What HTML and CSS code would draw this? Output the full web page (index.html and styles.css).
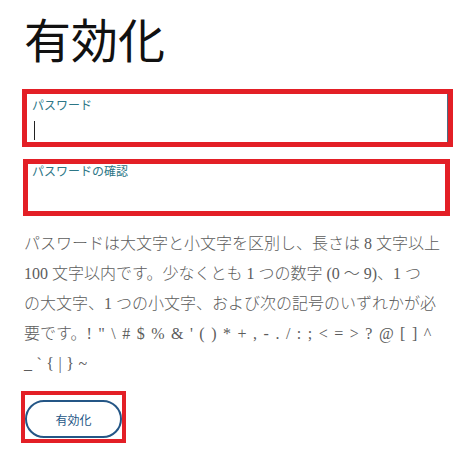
FILE: index.html
```html
<!DOCTYPE html>
<html lang="ja">
<head>
<meta charset="utf-8">
<title>有効化</title>
<link rel="stylesheet" href="styles.css">
</head>
<body>
<main class="page">
  <h1 class="title">有効化</h1>
  <div class="field field-one">
    <div class="field-inner focused">
      <label class="label">パスワード</label>
      <span class="caret"></span>
    </div>
  </div>
  <div class="field field-two">
    <div class="field-inner">
      <label class="label label-tight">パスワードの確認</label>
    </div>
  </div>
  <p class="hint">パスワードは大文字と小文字を区別し、長さは 8 文字以上<br>100 文字以内です。少なくとも 1 つの数字 (0 ～ 9)、1 つ<br>の大文字、1 つの小文字、および次の記号のいずれかが必<br>要です。<span class="symbols">! " \ # $ % &amp; ' ( ) * + , - . / : ; &lt; = &gt; ? @ [ ] ^</span><br><span class="symbols-end">_ ` { | } ~</span></p>
  <div class="btn-frame">
    <button class="btn" type="button">有効化</button>
  </div>
</main>
</body>
</html>
```

FILE: styles.css
```css
html, body {
  margin: 0;
  padding: 0;
  background: #ffffff;
}

.page {
  padding: 0 0 0 24px;
  width: 430px;
  font-family: "Noto Sans CJK JP", "Noto Sans", sans-serif;
}

.title {
  margin: 10px 0 0 0;
  font-size: 47px;
  line-height: 56px;
  font-weight: 400;
  color: #111111;
  letter-spacing: 0;
}

.field {
  border: 5px solid #e31f26;
  box-sizing: border-box;
  background: #ffffff;
}

.field-one {
  margin: 23px 0 0 -2px;
  width: 431px;
  height: 58px;
}

.field-two {
  margin: 12px 0 0 -1px;
  width: 427px;
  height: 57px;
}

.field-inner {
  height: 100%;
  box-sizing: border-box;
  display: flex;
  flex-direction: column;
  align-items: flex-start;
}

.field-one .field-inner {
  padding: 3px 0 0 5px;
}

.field-two .field-inner {
  padding: 0 0 0 4px;
}

.focused {
  border-right: 1px solid #4d6b82;
}

.label {
  font-size: 12px;
  line-height: 16px;
  color: #2d7686;
}

.label-tight {
  line-height: 13px;
}

.caret {
  display: block;
  width: 1px;
  height: 19px;
  margin: 8px 0 0 2px;
  background: #222222;
}

.hint {
  margin: 13px 0 0 0;
  font-family: "Liberation Serif", "Noto Sans CJK JP", serif;
  font-size: 16px;
  font-weight: 300;
  line-height: 30px;
  color: #5c5c5c;
  white-space: nowrap;
}

.symbols {
  word-spacing: 2.5px;
}

.symbols-end {
  word-spacing: 0.5px;
}

.btn-frame {
  display: inline-flex;
  margin: 12px 0 0 -3px;
  border: 4px solid #e31f26;
  padding: 5px 0 1px 0;
  background: #ffffff;
}

.btn {
  width: 97px;
  height: 38px;
  border: 2px solid #245686;
  border-radius: 19px;
  background: #ffffff;
  color: #245686;
  font-family: "Noto Sans CJK JP", "Noto Sans", sans-serif;
  font-size: 12px;
  padding: 0;
  cursor: pointer;
}
```
